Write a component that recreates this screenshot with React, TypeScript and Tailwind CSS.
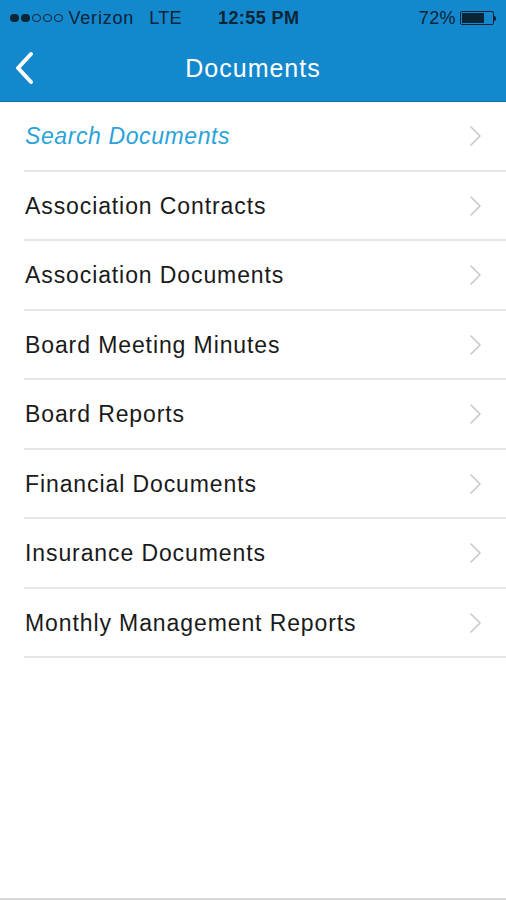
import React from 'react';

const items = [
  'Association Contracts',
  'Association Documents',
  'Board Meeting Minutes',
  'Board Reports',
  'Financial Documents',
  'Insurance Documents',
  'Monthly Management Reports',
];

function Chevron() {
  return (
    <svg width="14" height="22" viewBox="0 0 14 22" fill="none" className="mr-[23px] shrink-0">
      <path d="M2 2 L11 11 L2 20" stroke="#c8c8c8" strokeWidth="1.6" strokeLinecap="round" strokeLinejoin="round" />
    </svg>
  );
}

function Row({ label, search }: { label: string; search?: boolean }) {
  return (
    <div className="ml-6 flex h-[69.5px] items-center justify-between border-b-2 border-[#e6e6e6] pt-[1px]">
      <span
        className={
          search
            ? 'ml-[1px] text-[23px] italic tracking-[0.6px] text-[#29a3d9]'
            : 'ml-[1px] text-[23px] tracking-[0.9px] text-[#1a1a1a]'
        }
      >
        {label}
      </span>
      <Chevron />
    </div>
  );
}

export default function App() {
  return (
    <div className="flex h-[900px] w-[506px] flex-col bg-white font-['Liberation_Sans',sans-serif]">
      {/* Header */}
      <div className="border-b border-[#0f6fa8] bg-[#1488cd]">
        <div className="flex h-[36px] items-center px-[10px] text-[18px] tracking-[0.4px] text-[#0b2436]">
          <div className="flex items-center gap-[2.5px]">
            <span className="h-[8.5px] w-[8.5px] rounded-full bg-[#0b2436]" />
            <span className="h-[8.5px] w-[8.5px] rounded-full bg-[#0b2436]" />
            <span className="h-[8.5px] w-[8.5px] rounded-full border border-[#0b2436]" />
            <span className="h-[8.5px] w-[8.5px] rounded-full border border-[#0b2436]" />
            <span className="h-[8.5px] w-[8.5px] rounded-full border border-[#0b2436]" />
          </div>
          <span className="ml-[6px] tracking-[0.8px]">Verizon</span>
          <span className="ml-[15px]">LTE</span>
          <span className="ml-[36px] font-bold">12:55 PM</span>
          <span className="ml-auto">72%</span>
          <div className="ml-[4px] flex items-center">
            <div className="flex h-[14px] w-[34px] items-center rounded-[2px] border border-[#0b2436] p-[1px]">
              <div className="h-full w-[72%] bg-[#0b2436]" />
            </div>
            <div className="h-[5px] w-[2px] rounded-r-sm bg-[#0b2436]" />
          </div>
        </div>
        <div className="relative flex h-[65px] items-center justify-center">
          <svg width="20" height="34" viewBox="0 0 20 34" fill="none" className="absolute left-[14px] top-[15px]">
            <path d="M17 3 L4 17 L17 31" stroke="white" strokeWidth="4" strokeLinecap="round" strokeLinejoin="round" />
          </svg>
          <span className="text-[25px] tracking-[1px] text-white">Documents</span>
        </div>
      </div>

      {/* List */}
      <div>
        <Row label="Search Documents" search />
        {items.map((item) => (
          <Row key={item} label={item} />
        ))}
      </div>

      <div className="mt-auto h-[2px] bg-[#d9d9d9]" />
    </div>
  );
}
